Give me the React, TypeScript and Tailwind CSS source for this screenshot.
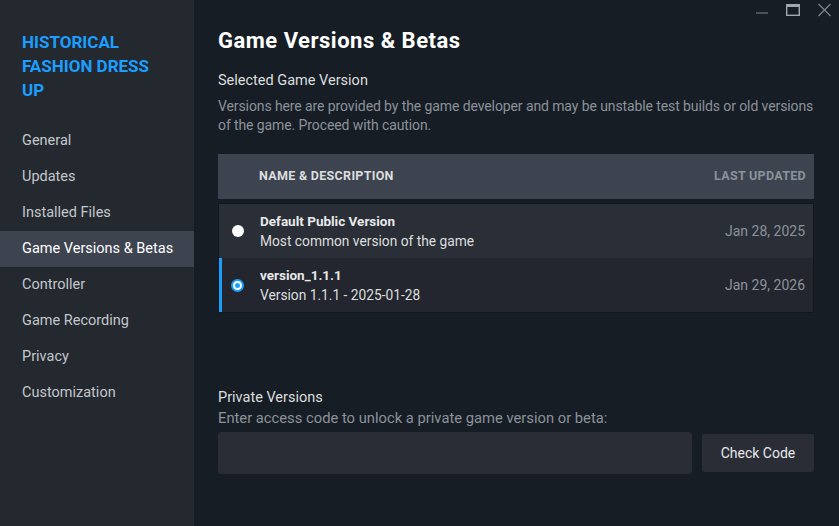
import { useState } from "react";

const navItems = [
  "General",
  "Updates",
  "Installed Files",
  "Game Versions & Betas",
  "Controller",
  "Game Recording",
  "Privacy",
  "Customization",
];

const versions = [
  { name: "Default Public Version", desc: "Most common version of the game", date: "Jan 28, 2025" },
  { name: "version_1.1.1", desc: "Version 1.1.1 - 2025-01-28", date: "Jan 29, 2026" },
];

function WindowControls() {
  return (
    <div className="absolute top-[3px] right-[7px] flex items-center gap-[16px]">
      <svg width="14" height="14" viewBox="0 0 14 14">
        <path d="M1 10h12" stroke="#5f656d" strokeWidth="1.5" />
      </svg>
      <svg width="16" height="14" viewBox="0 0 16 14">
        <rect x="1.7" y="1.7" width="12.6" height="10.6" fill="none" stroke="#a3a8ae" strokeWidth="1.4" />
        <path d="M1.7 3h12.6" stroke="#a3a8ae" strokeWidth="2" />
      </svg>
      <svg width="15" height="14" viewBox="0 0 15 14">
        <path d="M1.5 1l12 12M13.5 1l-12 12" stroke="#7b8289" strokeWidth="1.3" />
      </svg>
    </div>
  );
}

function Radio({ checked }: { checked: boolean }) {
  return checked ? (
    <span className="w-[13px] h-[13px] rounded-full bg-[#1a9fff] flex items-center justify-center">
      <span className="w-[9px] h-[9px] rounded-full bg-[#1a9fff] border-[2px] border-white" />
    </span>
  ) : (
    <span className="w-[12px] h-[12px] rounded-full bg-white" />
  );
}

export default function App() {
  const [selected, setSelected] = useState(1);

  return (
    <div className="relative flex w-[839px] h-[526px] overflow-hidden bg-[#171d25] font-['Roboto',sans-serif]">
      {/* sidebar */}
      <aside className="w-[194px] shrink-0 bg-[#24282f] pt-[30px]">
        <h2 className="pl-[22px] pr-[20px] text-[17px] leading-[24px] font-bold text-[#1a9fff]">
          HISTORICAL FASHION DRESS UP
        </h2>
        <nav className="mt-[21px] flex flex-col">
          {navItems.map((item, i) => (
            <div
              key={item}
              className={
                i === 3
                  ? "h-[36px] pl-[22px] flex items-center whitespace-nowrap text-[14.5px] text-white bg-[#3d4450]"
                  : "h-[36px] pl-[22px] flex items-center whitespace-nowrap text-[14.5px] text-[#c3c7cc]"
              }
            >
              {item}
            </div>
          ))}
        </nav>
      </aside>

      {/* main */}
      <main className="flex-1 pl-[24px] pr-[25px] pt-[27px]">
        <WindowControls />
        <h1 className="text-[22px] leading-[28px] font-bold text-white tracking-[0.5px]">Game Versions &amp; Betas</h1>
        <h3 className="mt-[16px] text-[14.5px] leading-[20px] text-[#dcdedf]">Selected Game Version</h3>
        <p className="mt-[6px] text-[14px] leading-[19px] text-[#8b929a] tracking-[-0.1px]">
          Versions here are provided by the game developer and may be unstable test builds or old versions of the game. Proceed with caution.
        </p>

        <div className="mt-[19px] h-[45px] bg-[#3d4450] flex items-center pl-[41px] pr-[8px] justify-between">
          <span className="text-[12.5px] font-bold text-[#dcdedf] tracking-[0.3px]">NAME &amp; DESCRIPTION</span>
          <span className="text-[12.5px] font-bold text-[#8b929a] tracking-[0.3px]">LAST UPDATED</span>
        </div>

        <div className="mt-[4px] border border-[#13171d]">
          {versions.map((v, i) => (
            <div
              key={v.name}
              onClick={() => setSelected(i)}
              className={
                i === selected
                  ? "h-[54px] flex items-center bg-[#23262e] border-l-[3px] border-[#1a9fff] pl-[9px] pr-[8px]"
                  : "h-[54px] flex items-center bg-[#2a2e36] pl-[13px] pr-[8px]"
              }
            >
              <Radio checked={i === selected} />
              <div className="ml-[16px] flex-1 flex flex-col pt-[1px]">
                <span className="text-[13.5px] leading-[19px] font-bold text-[#e7e9ea]">{v.name}</span>
                <span className="text-[13.75px] leading-[20px] text-[#dcdedf]">{v.desc}</span>
              </div>
              <span className="text-[14px] text-[#8b929a]">{v.date}</span>
            </div>
          ))}
        </div>

        <h3 className="mt-[75px] text-[14.5px] leading-[20px] text-[#dcdedf]">Private Versions</h3>
        <p className="text-[14.75px] leading-[20px] text-[#8b929a]">
          Enter access code to unlock a private game version or beta:
        </p>
        <div className="mt-[4px] flex items-center gap-[10px]">
          <input className="h-[42px] flex-1 rounded-[3px] bg-[#2a2d35] outline-none px-3 text-white text-[14px]" />
          <button className="h-[38px] w-[112px] rounded-[2px] bg-[#2a2d35] text-[14px] text-[#e7e9ea]">
            Check Code
          </button>
        </div>
      </main>
    </div>
  );
}
